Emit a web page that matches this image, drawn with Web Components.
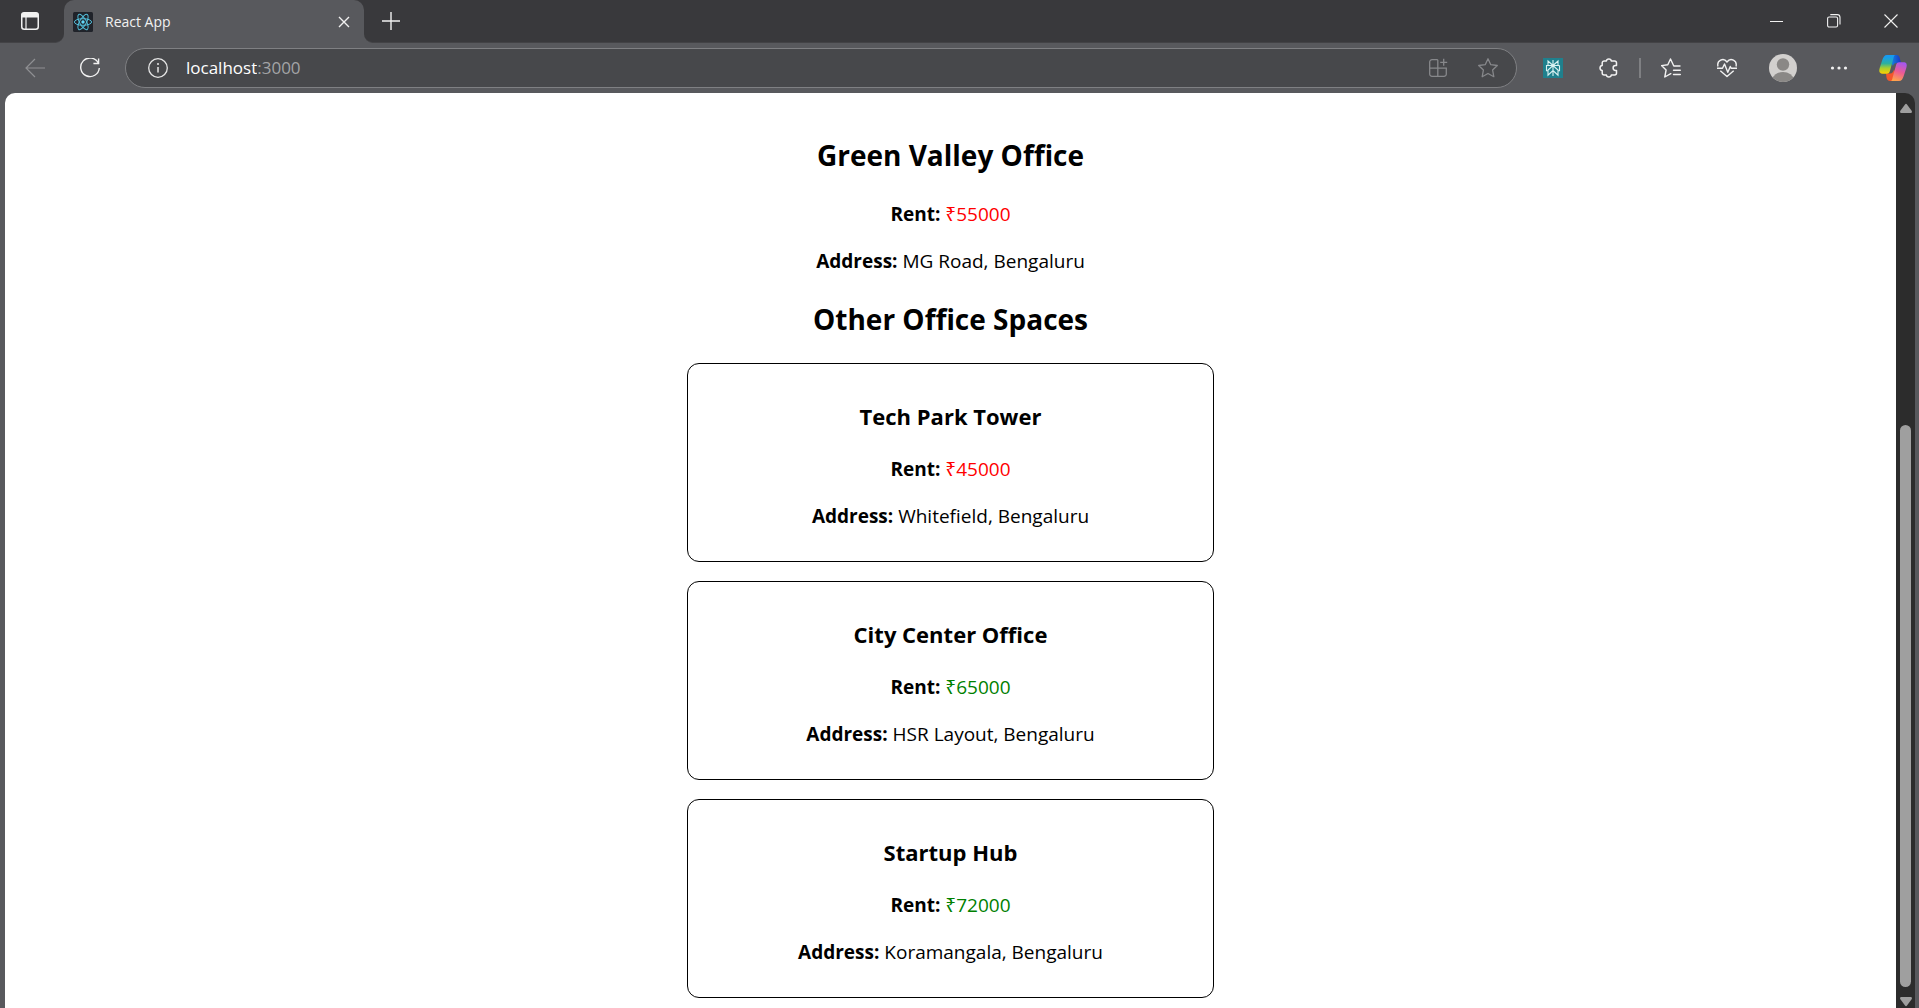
<!DOCTYPE html>
<html lang="en">
<head>
<meta charset="utf-8">
<title>React App</title>
<style>
  html, body { margin: 0; height: 100%; }
  body { overflow: hidden; background: #58595d; font-family: "Open Sans", "Noto Sans", sans-serif; }
</style>
</head>
<body>
<browser-window>
  <office-page>
    <office-summary heading="Green Valley Office" rent="55000" address="MG Road, Bengaluru"></office-summary>
    <office-list heading="Other Office Spaces">
      <office-card heading="Tech Park Tower" rent="45000" address="Whitefield, Bengaluru"></office-card>
      <office-card heading="City Center Office" rent="65000" address="HSR Layout, Bengaluru"></office-card>
      <office-card heading="Startup Hub" rent="72000" address="Koramangala, Bengaluru"></office-card>
    </office-list>
  </office-page>
</browser-window>

<script>
const ICONS = {
  tabs: [18, `<rect x=".75" y=".75" width="16.5" height="16.5" rx="2.5" fill="none" stroke="currentColor" stroke-width="1.5"/><path d="M1 5V3a2 2 0 0 1 2-2h12a2 2 0 0 1 2 2v2zM5 5v12" fill="currentColor" stroke="currentColor" stroke-width="1.2"/>`],
  react: [20, `<rect width="20" height="20" rx="1.5" fill="#20232a"/><circle cx="10" cy="10" r="1.7" fill="#61dafb"/><g fill="none" stroke="#53bdd8" stroke-width="1"><ellipse cx="10" cy="10" rx="8.6" ry="3.3"/><ellipse cx="10" cy="10" rx="8.6" ry="3.3" transform="rotate(60 10 10)"/><ellipse cx="10" cy="10" rx="8.6" ry="3.3" transform="rotate(120 10 10)"/></g>`],
  close: [12, `<path d="M1 1l10 10M11 1L1 11" stroke="currentColor" stroke-width="1.4"/>`],
  plus: [18, `<path d="M9 0v18M0 9h18" stroke="currentColor" stroke-width="1.4"/>`],
  minimize: [14, `<path d="M0 7.5h13" stroke="currentColor"/>`],
  restore: [14, `<g fill="none" stroke="currentColor" stroke-width="1.1"><rect x=".6" y="3" width="10" height="10" rx="1.5"/><path d="M3.3.6h6.9a2.8 2.8 0 0 1 2.8 2.8v7"/></g>`],
  exit: [14, `<path d="M.5.5l13 13M13.5.5l-13 13" stroke="currentColor" stroke-width="1.1"/>`],
  back: [20, `<path d="M10 1L1 10l9 9M1 10h19" fill="none" stroke="currentColor" stroke-width="1.2"/>`],
  reload: [20, `<path d="M18.3 5A9.3 9.3 0 1 0 19.3 10M18.6.5v5h-5.2" fill="none" stroke="currentColor" stroke-width="1.4"/>`],
  info: [20, `<circle cx="10" cy="10" r="9.3" fill="none" stroke="currentColor" stroke-width="1.3"/><path d="M10 9v5.5" stroke="currentColor" stroke-width="1.5"/><circle cx="10" cy="6.1" r="1" fill="currentColor"/>`],
  apps: [20, `<path d="M9.8 1.700H4A2.300 2.300 0 0 0 1.700 4v12A2.300 2.300 0 0 0 4 18.300h12a2.300 2.300 0 0 0 2.300-2.300v-5.800H1.700M9.800 1.700v16.600M15.700.8v7M12.200 4.300h7" fill="none" stroke="currentColor" stroke-width="1.300"/>`],
  star: [20, `<path d="M10 .8l2.800 5.900 6.500.8-4.700 4.500 1.200 6.700L10 15.500l-5.800 3.200L5.400 12 .7 7.500l6.500-.8z" fill="none" stroke="currentColor" stroke-width="1.300" stroke-linejoin="round"/>`],
  perplexity: [20, `<rect width="20" height="20" fill="#1f808d"/><path d="M10 2v16M10 7.500L5 3v4.500h10V3L10 7.500M5 12.800H3.500V7.500H15M16.500 7.500v5.300H15M15 7.500h1.500M10 7.500l-5 4.500v5.200l5-4.700 5 4.700V12z" fill="none" stroke="#d9f2f2" stroke-width="1.100"/>`],
  puzzle: [20, `<path d="M7.400 3c.3-2.800 4.600-2.800 4.900 0h3.200a2 2 0 0 1 2 2v2.600h-1c-3.200 0-3.200 4.800 0 4.800h1V15a2 2 0 0 1-2 2h-3.200c-.3 2.800-4.600 2.800-4.900 0H5.200a2 2 0 0 1-2-2v-2.500c-2.900-.3-2.900-4.700 0-5V5a2 2 0 0 1 2-2z" fill="none" stroke="currentColor" stroke-width="1.500" stroke-linejoin="round"/>`],
  favorites: [20, `<path d="M19.500 8h-6.200L10 1 7.300 6.800 1 7.600 5.600 12l-1.300 7 6-3.300M13 12.300h6.800M13 16.500h6.800" transform="translate(-.5)" fill="none" stroke="currentColor" stroke-width="1.400" stroke-linejoin="round" stroke-linecap="round"/>`],
  health: [20, `<path d="M1 8.500C-.5 2.500 6.500-1 10 4c3.500-5 10.500-1.500 9 4.500M3.300 12.700L10 18.500l6.700-5.800M0 10.300h5.500l2-4.300 3.300 8.300 2.500-5.800 1 1.800H20" fill="none" stroke="currentColor" stroke-width="1.400" stroke-linejoin="round"/>`],
  person: [28, `<defs><clipPath id="c"><circle cx="14" cy="14" r="14"/></clipPath></defs><circle cx="14" cy="14" r="14" fill="#d2d0ce"/><g clip-path="url(#c)" fill="#8a8886"><circle cx="14" cy="10.500" r="6.200"/><ellipse cx="14" cy="25.500" rx="10.500" ry="7.500"/></g>`],
  more: [18, `<g fill="currentColor"><circle cx="2.500" cy="9" r="1.600"/><circle cx="9" cy="9" r="1.600"/><circle cx="15.500" cy="9" r="1.600"/></g>`],
  copilot: [32, `<defs><linearGradient id="l" x1="0" y1="0" x2="0" y2="1"><stop offset=".1" stop-color="#169bf0"/><stop offset=".45" stop-color="#2bb0a0"/><stop offset=".7" stop-color="#a6cf30"/><stop offset="1" stop-color="#ffd000"/></linearGradient><linearGradient id="r" x1=".6" y1="0" x2=".3" y2="1"><stop offset="0" stop-color="#a657ee"/><stop offset=".5" stop-color="#ee5b93"/><stop offset="1" stop-color="#ffa54a"/></linearGradient><linearGradient id="t"><stop offset="0" stop-color="#12a5ec"/><stop offset="1" stop-color="#1a35c4"/></linearGradient></defs>
    <g transform="translate(0 2)"><path d="M8 1h9.500c2 0 2.800 1.500 3.300 3.500L22 9h-4.500c-2 0-3 1-3.500 3z" fill="url(#t)"/><path d="M20 27h-9c-2 0-3-1.500-3.500-3.500L7 19.500h4c2.500 0 3.500-2 4-4z" fill="#f4562c"/><path d="M16 1H8C5.500 1 4.300 3 3.300 6L.7 14C-.5 18 .8 19.700 3.500 19.700h4.200c2 0 2.800-1.200 3.300-3l3.300-12C14.800 2.500 15 1.300 16 1z" fill="url(#l)"/><path d="M12 27h8c2.500 0 3.700-2 4.700-5l2.600-8c1.200-4-.1-5.700-2.800-5.700h-4.200c-2 0-2.800 1.200-3.300 3l-3.300 12C13.200 25.500 13 26.700 12 27z" fill="url(#r)"/></g>`],
  up: [12, `<path d="M5 2.500q1-1.500 2 0L11.800 9q.5 2-1 2H1.200q-1.500 0-1-2z" fill="#9f9f9f"/>`],
  down: [12, `<path d="M5 9.500q1 1.500 2 0L11.800 3q.5-2-1-2H1.200q-1.500 0-1 2z" fill="#9f9f9f"/>`]
};

class UiIcon extends HTMLElement {
  connectedCallback() {
    const [size, body] = ICONS[this.getAttribute('name')];
    const root = this.attachShadow({ mode: 'open' });
    root.innerHTML = `<style>:host{display:inline-flex;flex:none}svg{display:block}</style>
      <svg width="${size}" height="${size}" viewBox="0 0 ${size} ${size}" aria-hidden="true">${body}</svg>`;
  }
}

class IconButton extends HTMLElement {
  connectedCallback() {
    this.attachShadow({ mode: 'open' }).innerHTML = `<style>
      :host{display:flex;flex:none;width:40px;height:40px}
      button{flex:1;display:flex;align-items:center;justify-content:center;margin:0;padding:0;border:0;background:none;color:inherit}
      </style><button type="button" aria-label="${this.getAttribute('label')}"><ui-icon name="${this.getAttribute('icon')}"></ui-icon></button>`;
  }
}

class TabStrip extends HTMLElement {
  connectedCallback() {
    this.attachShadow({ mode: 'open' }).innerHTML = `<style>
      :host{display:flex;height:43px;color:#f1f1f1}
      .strip{flex:1;display:flex;background:#58595d}
      .start,.end{display:flex;align-items:center;background:#39393c;box-sizing:border-box;border-bottom:1px solid #434346}
      .start{width:64px;border-bottom-right-radius:9px;padding-left:10px}
      .end{flex:1;border-bottom-left-radius:9px;padding-left:7px}
      .mid{display:flex;background:#39393c}
      .tab{width:300px;box-sizing:border-box;display:flex;align-items:center;gap:12px;padding:0 0 0 9px;background:#58595d;border-radius:10px 10px 0 0;font-size:14px;line-height:20px}
      .tab span{flex:1}
      .space{flex:1}
      .win{width:57px}
      </style>
      <div class="strip">
        <div class="start"><icon-button icon="tabs" label="Tab actions"></icon-button></div>
        <div class="mid"><div class="tab"><ui-icon name="react"></ui-icon><span>React App</span><icon-button icon="close" label="Close tab"></icon-button></div></div>
        <div class="end"><icon-button icon="plus" label="New tab"></icon-button><div class="space"></div>
          <icon-button class="win" icon="minimize" label="Minimize"></icon-button>
          <icon-button class="win" icon="restore" label="Restore"></icon-button>
          <icon-button class="win" icon="exit" label="Close"></icon-button></div>
      </div>`;
  }
}

class AddressBar extends HTMLElement {
  connectedCallback() {
    this.attachShadow({ mode: 'open' }).innerHTML = `<style>
      :host{flex:1;display:flex;align-items:center;box-sizing:border-box;height:40px;border:1px solid #7f8083;border-radius:20px;background:#47484b;padding:0 0 0 12px;color:#87888b}
      .info{color:#e6e6e6}
      label{flex:1;display:flex;align-items:center;padding-left:8px;font-size:17px;line-height:24px;color:#a3a4a6}
      input{field-sizing:content;font:inherit;color:#fff;background:none;border:0;padding:0;margin:0;outline:0}
      .tools{display:flex;gap:10px;padding-right:8px}
      </style>
      <icon-button class="info" icon="info" label="Site information"></icon-button>
      <label><input type="text" value="localhost" size="8" aria-label="Address"><span>:3000</span></label>
      <div class="tools"><icon-button icon="apps" label="App available"></icon-button><icon-button icon="star" label="Add to favorites"></icon-button></div>`;
  }
}

class BrowserToolbar extends HTMLElement {
  connectedCallback() {
    this.attachShadow({ mode: 'open' }).innerHTML = `<style>
      :host{display:flex;align-items:center;height:50px;padding:0 4px 0 15px;color:#f1f1f1}
      .nav{display:flex;gap:15px;padding-right:15px}
      .back{color:#8f9093}
      .tools{display:flex;align-items:center;gap:16px;padding-left:16px}
      .pair{display:flex;align-items:center;gap:10px}
      .pair i{width:2px;height:20px;background:#7f8083}
      </style>
      <div class="nav"><icon-button class="back" icon="back" label="Back"></icon-button><icon-button icon="reload" label="Refresh"></icon-button></div>
      <address-bar></address-bar>
      <div class="tools">
        <icon-button icon="perplexity" label="Perplexity"></icon-button>
        <div class="pair"><icon-button icon="puzzle" label="Extensions"></icon-button><i></i><icon-button icon="favorites" label="Favorites"></icon-button></div>
        <icon-button icon="health" label="Browser essentials"></icon-button>
        <icon-button icon="person" label="Profile"></icon-button>
        <icon-button icon="more" label="Settings and more"></icon-button>
        <icon-button icon="copilot" label="Copilot"></icon-button>
      </div>`;
  }
}

class ScrollRail extends HTMLElement {
  connectedCallback() {
    this.attachShadow({ mode: 'open' }).innerHTML = `<style>
      :host{display:flex;flex-direction:column;align-items:center;box-sizing:border-box;width:19px;padding:9px 0 0;background:#2c2c2c;border-top-right-radius:10px}
      .gap{flex:311}
      .thumb{flex:563;width:11px;margin-bottom:9px;border-radius:6px;background:#9f9f9f}
      </style><ui-icon name="up"></ui-icon><div class="gap"></div><div class="thumb"></div><ui-icon name="down"></ui-icon>`;
  }
}

class BrowserWindow extends HTMLElement {
  connectedCallback() {
    this.attachShadow({ mode: 'open' }).innerHTML = `<style>
      :host{display:flex;flex-direction:column;height:100vh;background:#58595d}
      .view{flex:1;min-height:0;display:flex;padding:0 4px 0 5px}
      main{flex:1;min-width:0;overflow:hidden;background:#fff;border-top-left-radius:10px}
      </style><tab-strip></tab-strip><browser-toolbar></browser-toolbar>
      <div class="view"><main><slot></slot></main><scroll-rail></scroll-rail></div>`;
  }
}

class OfficePage extends HTMLElement {
  connectedCallback() {
    this.attachShadow({ mode: 'open' }).innerHTML = `<style>
      :host{display:block;padding-top:42px;color:#000;text-align:center}
      </style><slot></slot>`;
  }
}

const officeText = `
  h2{margin:0;font-size:28px;line-height:40px}
  h3{margin:0;font-size:22px;line-height:31px}
  p{margin:0;font-size:19px;line-height:27px}
  .low{color:red}.high{color:green}`;

function officeDetails(host) {
  const rent = host.getAttribute('rent');
  return `<p><b>Rent:</b> <span class="${rent < 60000 ? 'low' : 'high'}">₹${rent}</span></p>
    <p><b>Address:</b> ${host.getAttribute('address')}</p>`;
}

class OfficeSummary extends HTMLElement {
  connectedCallback() {
    this.attachShadow({ mode: 'open' }).innerHTML = `<style>${officeText}
      :host{display:flex;flex-direction:column;gap:20px}
      h2{margin-bottom:6px}
      </style><h2>${this.getAttribute('heading')}</h2>${officeDetails(this)}`;
  }
}

class OfficeList extends HTMLElement {
  connectedCallback() {
    this.attachShadow({ mode: 'open' }).innerHTML = `<style>${officeText}
      :host{display:flex;flex-direction:column;align-items:center;gap:24px;padding-top:24px}
      .cards{display:flex;flex-direction:column;gap:19px;width:527px;max-width:100%}
      </style><h2>${this.getAttribute('heading')}</h2><div class="cards"><slot></slot></div>`;
  }
}

class OfficeCard extends HTMLElement {
  connectedCallback() {
    this.attachShadow({ mode: 'open' }).innerHTML = `<style>${officeText}
      :host{display:flex;flex-direction:column;gap:20px;border:1px solid #000;border-radius:12px;padding:37px 13px 31px}
      h3{margin-bottom:4px}
      </style><h3>${this.getAttribute('heading')}</h3>${officeDetails(this)}`;
  }
}

customElements.define('ui-icon', UiIcon);
customElements.define('icon-button', IconButton);
customElements.define('tab-strip', TabStrip);
customElements.define('address-bar', AddressBar);
customElements.define('browser-toolbar', BrowserToolbar);
customElements.define('scroll-rail', ScrollRail);
customElements.define('browser-window', BrowserWindow);
customElements.define('office-page', OfficePage);
customElements.define('office-summary', OfficeSummary);
customElements.define('office-list', OfficeList);
customElements.define('office-card', OfficeCard);
</script>
</body>
</html>
